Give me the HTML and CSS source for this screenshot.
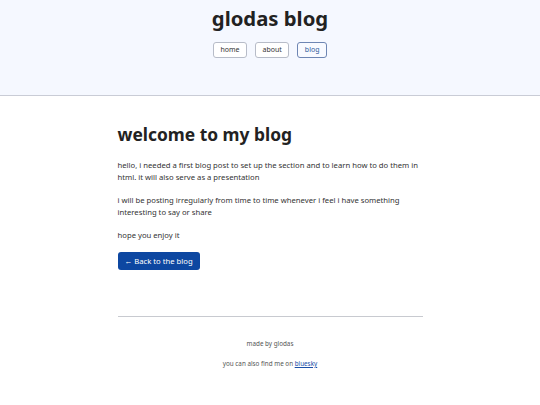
FILE: index.html
```html
<!DOCTYPE html>
<html>
<head>
<meta charset="utf-8">
<link rel="stylesheet" href="styles.css">
</head>
<body>
<header class="site-header">
  <h1 class="site-title">glodas blog</h1>
  <nav class="nav">
    <a class="nav-btn" href="#">home</a>
    <a class="nav-btn" href="#">about</a>
    <a class="nav-btn active" href="#">blog</a>
  </nav>
</header>
<main class="content">
  <h2 class="post-title">welcome to my blog</h2>
  <p>hello, i needed a first blog post to set up the section and to learn how to do them in html. it will also serve as a presentation</p>
  <p>i will be posting irregularly from time to time whenever i feel i have something interesting to say or share</p>
  <p>hope you enjoy it</p>
  <a class="back-btn" href="#">&larr; Back to the blog</a>
  <hr class="rule">
  <footer class="footer">
    <p>made by glodas</p>
    <p>you can also find me on <a href="#">bluesky</a></p>
  </footer>
</main>
</body>
</html>
```
FILE: styles.css
```css
* { box-sizing: border-box; }
html, body { margin: 0; padding: 0; background: #fff; }
body {
  font-family: "Noto Sans", "Open Sans", sans-serif;
  color: #222;
}
.site-header {
  background: #f5f8ff;
  border-bottom: 1px solid #c9ccd6;
  height: 96px;
  display: flex;
  flex-direction: column;
  align-items: center;
  padding-top: 4px;
}
.site-title {
  margin: 0;
  font-size: 20.3px;
  font-weight: 700;
  line-height: 28px;
  color: #222;
}
.nav {
  display: flex;
  gap: 8px;
  margin-top: 10px;
}
.nav-btn {
  display: block;
  font-size: 7px;
  line-height: 14px;
  padding: 0 6.5px;
  border: 1px solid #b7bcc8;
  border-radius: 3px;
  background: #fff;
  color: #333;
  text-decoration: none;
}
.nav-btn.active {
  border-color: #6e86b3;
  color: #2f5a9c;
  background: #f8faff;
}
.content {
  width: 305px;
  margin: 0 auto;
  padding-top: 25px;
}
.post-title {
  margin: 0 0 12px;
  font-size: 17.4px;
  line-height: 26px;
  font-weight: 700;
  color: #222;
}
.content p {
  margin: 0 0 11px;
  font-size: 7.7px;
  line-height: 12px;
  color: #333;
}
.back-btn {
  display: block;
  width: fit-content;
  margin-top: 4px;
  background: #0d47a1;
  color: #fff;
  text-decoration: none;
  font-size: 7.7px;
  line-height: 18px;
  padding: 0 7px;
  border-radius: 3px;
}
.rule {
  margin: 46px 0 0;
  border: 0;
  border-top: 1px solid #c8cad0;
}
.footer {
  padding-top: 22px;
  text-align: center;
}
.footer p {
  font-size: 6.3px;
  line-height: 10px;
  margin: 0 0 10px;
  color: #555;
}
.footer a { color: #1a4fa8; }
```
